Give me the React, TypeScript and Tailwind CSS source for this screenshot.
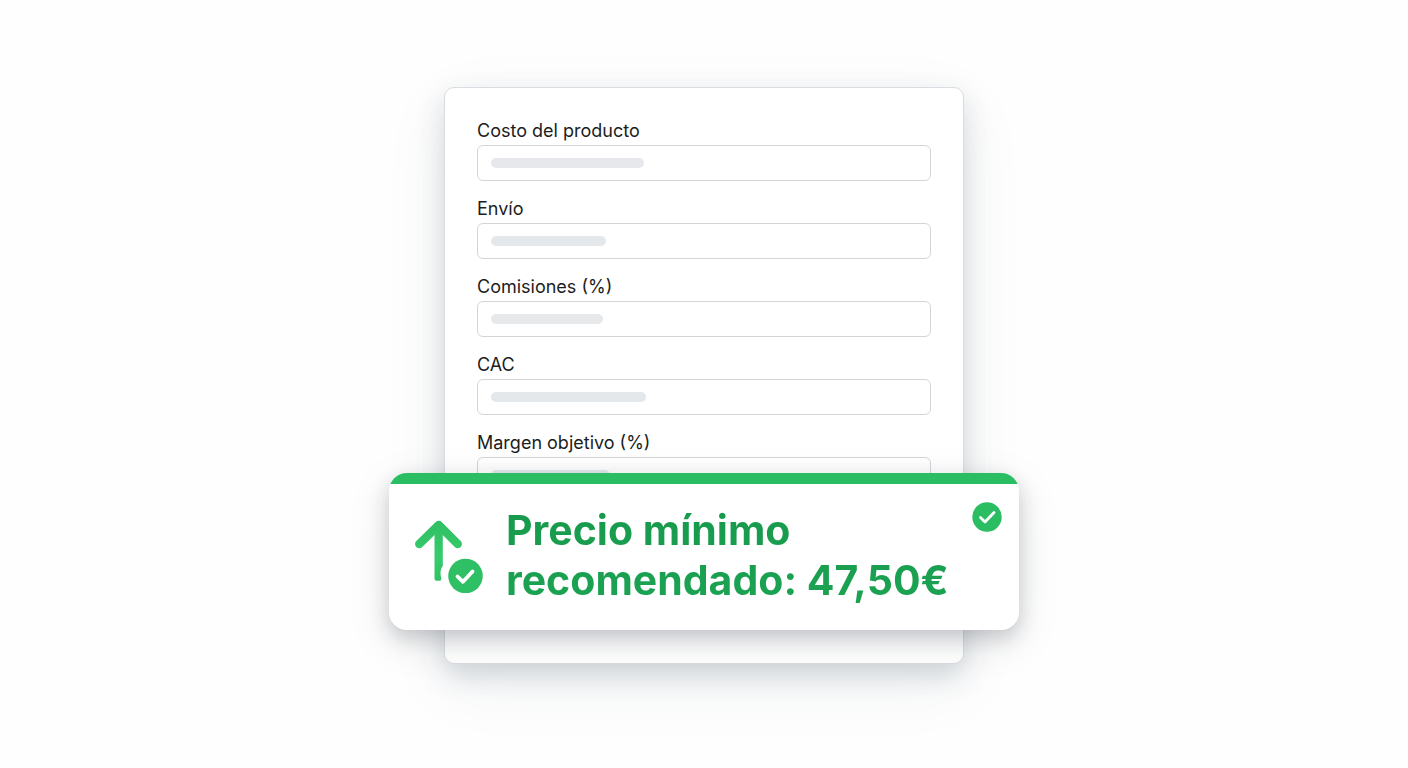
type Field = {
  id: string;
  label: string;
  bar: string;
};

const FIELDS: Field[] = [
  { id: "costo", label: "Costo del producto", bar: "w-[153px] bg-[#e7e8eb]" },
  { id: "envio", label: "Envío", bar: "w-[115px] bg-[#e4e8eb]" },
  { id: "comisiones", label: "Comisiones (%)", bar: "w-28 bg-[#e7e8ea]" },
  { id: "cac", label: "CAC", bar: "w-[155px] bg-[#e4e8eb]" },
  { id: "margen", label: "Margen objetivo (%)", bar: "w-[119px] bg-[#e4e8eb]" },
];

function PriceField({ id, label, bar }: Field) {
  return (
    <div className="flex flex-col gap-[2px]">
      <label htmlFor={id} className="text-lg leading-6 text-[#1b1d21]">
        {label}
      </label>
      <div className="relative flex">
        <input
          id={id}
          type="text"
          className="h-9 w-full rounded-md border border-[#d3d5d9] bg-white px-3 text-base outline-none focus:border-green-500"
        />
        {/* Skeleton value */}
        <span
          className={`pointer-events-none absolute top-1/2 left-[14px] h-[10px] -translate-y-1/2 rounded-full ${bar}`}
        />
      </div>
    </div>
  );
}

function TrendIcon() {
  return (
    <svg viewBox="0 -2 70 76" className="h-[76px] w-[70px] shrink-0" fill="none" aria-hidden="true">
      <defs>
        <linearGradient id="trend" x1="0" y1="0" x2="0" y2="76" gradientUnits="userSpaceOnUse">
          <stop stopColor="#2fbe62" />
          <stop offset="0.5" stopColor="#36cc6e" />
          <stop offset="1" stopColor="#2dbb60" />
        </linearGradient>
      </defs>
      <path d="M5.300 25 24.700 6l19 19" stroke="url(#trend)" strokeWidth="8.500" strokeLinecap="round" strokeLinejoin="round" />
      <path
        d="M20.500 7h8.300v40c-1.600 2-2.300 4.500-2.300 7.500 0 2 .8 3.500.8 5.500 0 1.200-.6 1.800-2 1.800h-2.300c-1.700 0-2.500-.8-2.500-2.500z"
        fill="url(#trend)"
      />
      <circle cx="51.500" cy="57" r="17.300" fill="#2fc065" />
      <path d="m43.500 57.500 5.500 5.300 9.500-10.300" stroke="#fff" strokeWidth="3.800" strokeLinecap="round" strokeLinejoin="round" />
    </svg>
  );
}

function CheckBadge() {
  return (
    <svg viewBox="0 0 30 30" className="absolute top-[18px] right-[17px] size-[30px]" fill="none" aria-hidden="true">
      <circle cx="15" cy="15" r="14.700" fill="#2abd62" />
      <path d="m8.500 15.500 4.500 4.500 9-9.500" stroke="#fff" strokeWidth="2.800" strokeLinecap="round" strokeLinejoin="round" />
    </svg>
  );
}

function ResultCard() {
  return (
    <div className="absolute -inset-x-14 bottom-[33px] rounded-[18px] bg-white shadow-[0_8px_20px_rgba(30,35,50,0.2),0_12px_44px_rgba(30,35,50,0.1)]">
      <div className="overflow-hidden rounded-[18px]">
        <div className="h-[11px] bg-[#2abd62]" />
        <div className="relative flex items-center gap-[22px] pt-[21px] pr-12 pb-[25px] pl-[25px]">
          <TrendIcon />
          <h2 className="bg-linear-to-b from-[#17994c] to-[#1ba352] bg-clip-text text-[41px] leading-[50px] font-bold text-transparent">
            Precio mínimo recomendado: 47,50€
          </h2>
          <CheckBadge />
        </div>
      </div>
    </div>
  );
}

export default function App() {
  return (
    <main className="flex min-h-screen items-center justify-center bg-[#fefefe] px-16 pb-[17px] font-[Inter,sans-serif]">
      <section className="relative w-full max-w-[520px] rounded-[10px] border border-[#d9dce0] bg-white px-8 pt-[31px] pb-[170px] shadow-[0_12px_28px_rgba(40,60,80,0.18),0_20px_70px_rgba(40,60,80,0.06)]">
        <form className="flex flex-col gap-4">
          {FIELDS.map((field) => (
            <PriceField key={field.id} {...field} />
          ))}
        </form>
        <ResultCard />
      </section>
    </main>
  );
}
